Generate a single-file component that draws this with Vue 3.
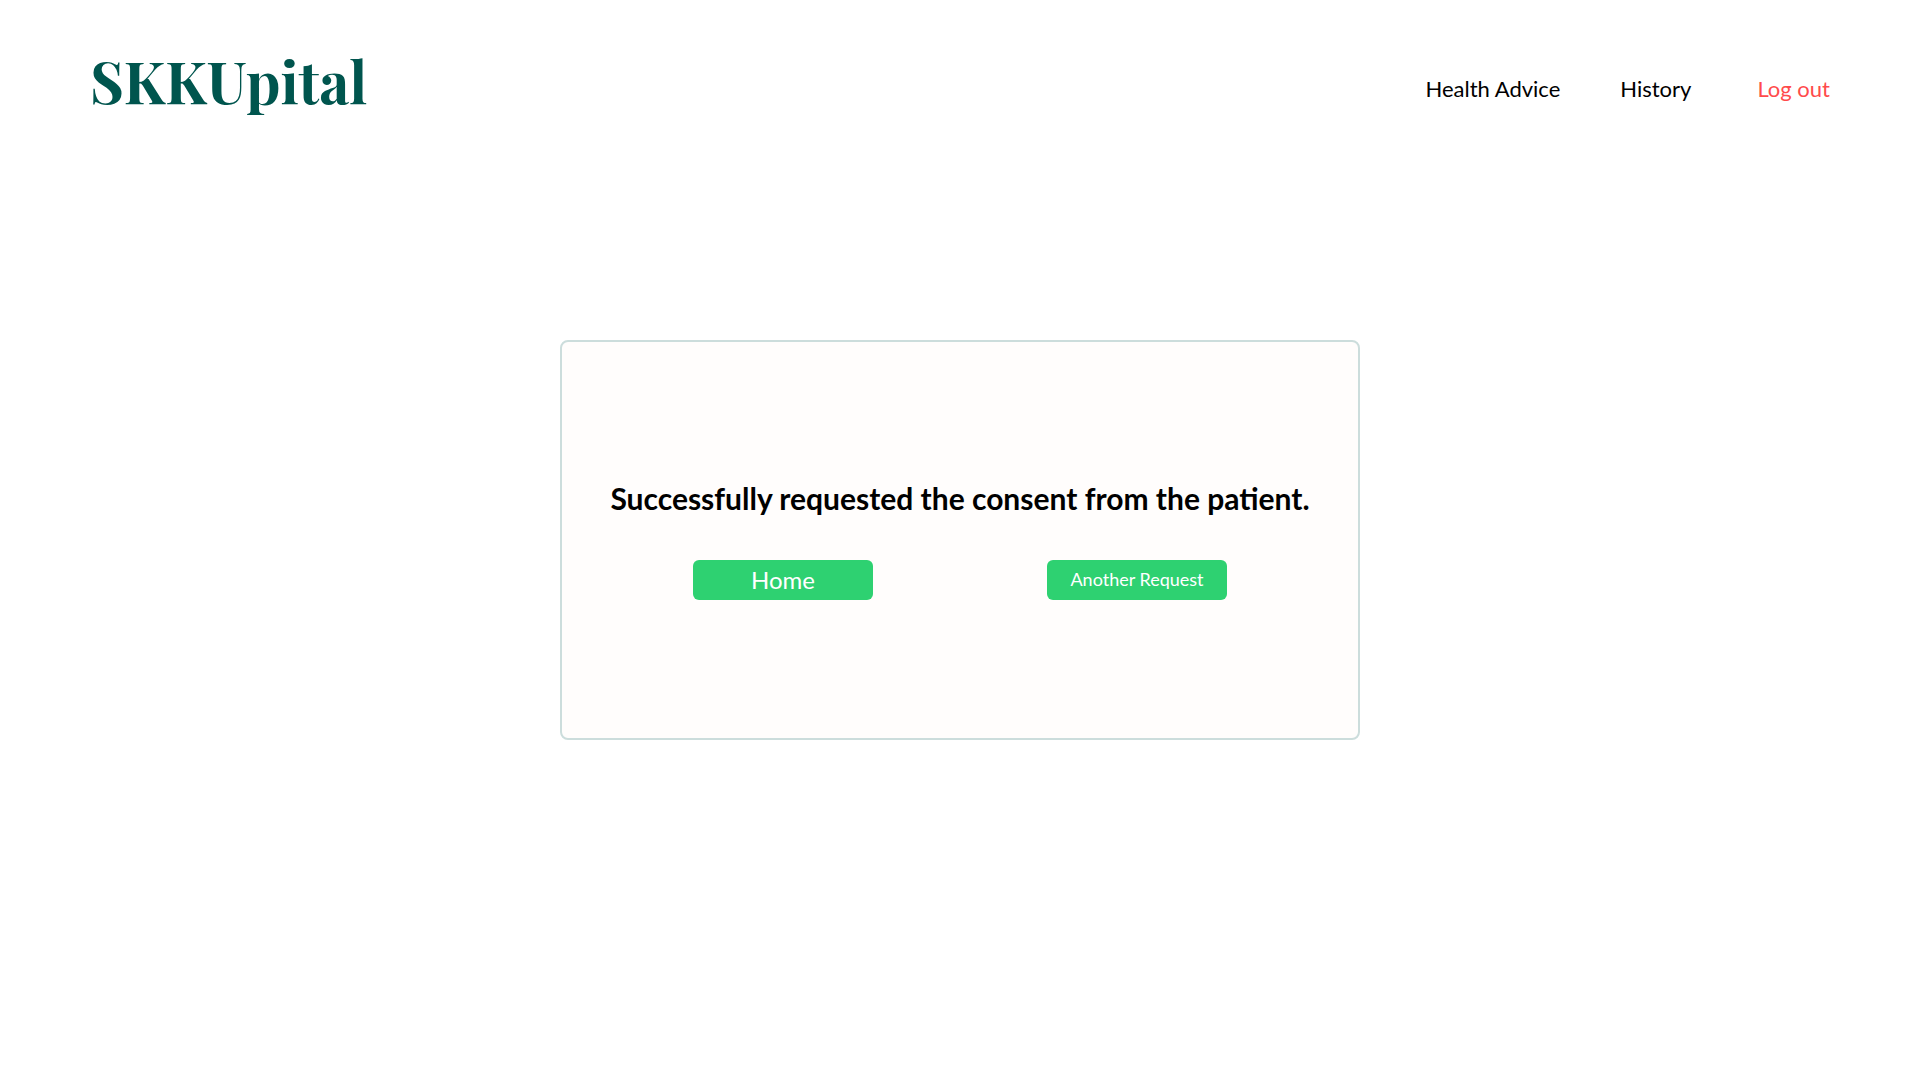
<script setup>
const links = [
  { label: 'Health Advice', href: '#advice' },
  { label: 'History', href: '#history' },
]
</script>

<template>
  <div class="page">
    <header class="header">
      <a class="logo" href="#home">SKKUpital</a>
      <nav class="nav">
        <a v-for="link in links" :key="link.href" :href="link.href">{{ link.label }}</a>
        <button class="logout" type="button">Log out</button>
      </nav>
    </header>
    <main class="main">
      <section class="card">
        <h1 class="message">Successfully requested the consent from the patient.</h1>
        <div class="actions">
          <button class="action" type="button">Home</button>
          <button class="action compact" type="button">Another Request</button>
        </div>
      </section>
    </main>
  </div>
</template>

<style>
body {
  margin: 0;
  background: #fff;
}
</style>

<style scoped>
.page {
  display: grid;
  grid-template-rows: 180px 1fr 180px;
  min-height: 100vh;
  font-family: Lato, sans-serif;
  color: #000;
}

.header {
  display: flex;
  align-items: center;
  justify-content: space-between;
  padding: 0 84px 2px 90px;
  box-sizing: border-box;
}

.logo {
  padding-bottom: 18px;
  font-family: "Playfair Display", "Liberation Serif", serif;
  font-size: 58px;
  font-weight: 700;
  line-height: 80px;
  color: #00554e;
  text-decoration: none;
}

.nav {
  display: flex;
  align-items: center;
  gap: 60px;
  font-size: 22px;
  line-height: 28px;
}

.nav a {
  color: inherit;
  text-decoration: none;
}

.logout {
  padding: 0 6px;
  border: 0;
  background: none;
  font: inherit;
  color: #ff4b4b;
  cursor: pointer;
}

.main {
  display: flex;
  align-items: center;
  justify-content: center;
}

.card {
  display: flex;
  flex-direction: column;
  align-items: center;
  justify-content: center;
  gap: 44px;
  width: 800px;
  max-width: 100%;
  min-height: 400px;
  box-sizing: border-box;
  border: 2px solid #ccdddc;
  border-radius: 8px;
  background: #fffdfc;
}

.message {
  margin: 0;
  font-size: 30px;
  font-weight: 700;
  line-height: 36px;
  text-align: center;
}

.actions {
  display: flex;
  flex-wrap: wrap;
  justify-content: center;
  gap: 20px 174px;
}

.action {
  width: 180px;
  height: 40px;
  padding: 0 0 2px;
  border: 0;
  border-radius: 6px;
  background: #2ed171;
  color: #fff;
  font-family: inherit;
  font-size: 24px;
  cursor: pointer;
}

.action.compact {
  font-size: 18px;
}
</style>
